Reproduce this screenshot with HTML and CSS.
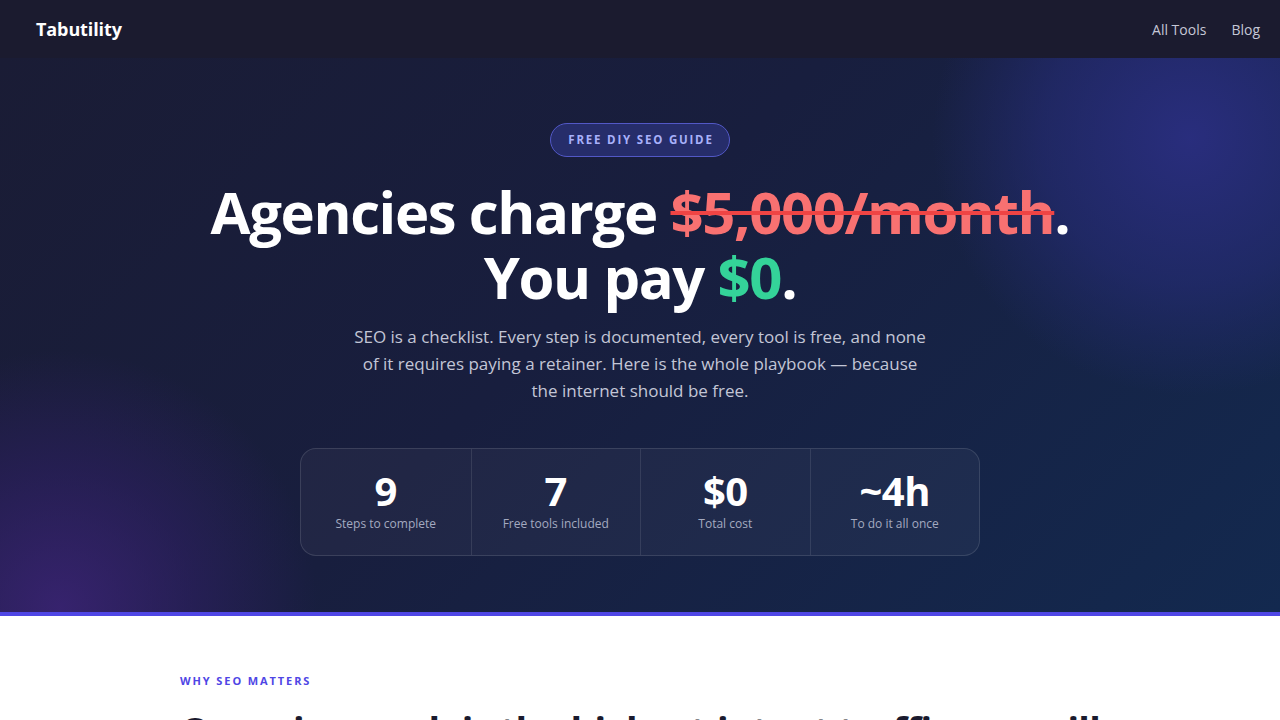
FILE: index.html
```html
<!DOCTYPE html>
<html lang="en">
<head>
<meta charset="utf-8">
<title>Free DIY SEO Guide — Tabutility</title>
<link rel="stylesheet" href="styles.css">
</head>
<body>
<header class="nav">
  <a class="logo" href="#">Tabutility</a>
  <nav class="links">
    <a href="#">All Tools</a>
    <a href="#">Blog</a>
  </nav>
</header>
<section class="hero">
  <div class="glow glow-a"></div>
  <div class="glow glow-b"></div>
  <div class="hero-inner">
    <span class="badge">FREE DIY SEO GUIDE</span>
    <h1 class="title">Agencies charge <s class="price">$5,000/month</s>.<br>You pay <span class="free">$0</span>.</h1>
    <p class="lead">SEO is a checklist. Every step is documented, every tool is free, and none of it requires paying a retainer. Here is the whole playbook — because the internet should be free.</p>
    <div class="stats">
      <div class="stat"><div class="num">9</div><div class="label">Steps to complete</div></div>
      <div class="stat"><div class="num">7</div><div class="label">Free tools included</div></div>
      <div class="stat"><div class="num">$0</div><div class="label">Total cost</div></div>
      <div class="stat"><div class="num">~4h</div><div class="label">To do it all once</div></div>
    </div>
  </div>
</section>
<section class="why">
  <div class="why-inner">
    <div class="eyebrow">WHY SEO MATTERS</div>
    <h2 class="why-title">Organic search is the highest-intent traffic you will ever get</h2>
  </div>
</section>
</body>
</html>
```
FILE: styles.css
```css
* { box-sizing: border-box; }
html, body { margin: 0; padding: 0; }
body {
  font-family: "Open Sans", "Noto Sans", sans-serif;
  background: #ffffff;
  color: #1a1a2e;
}
a { text-decoration: none; color: inherit; }

.nav {
  height: 58px;
  background: #1b1b2f;
  display: flex;
  align-items: center;
  justify-content: space-between;
  padding: 0 20px 0 36px;
}
.logo {
  color: #ffffff;
  font-weight: 700;
  font-size: 18px;
  letter-spacing: -0.1px;
}
.links { display: flex; gap: 25px; }
.links a { color: #c5c7d6; font-size: 14px; }

.hero {
  position: relative;
  overflow: hidden;
  background: linear-gradient(135deg, #1a1c35 0%, #181e3e 45%, #13294f 100%);
  border-bottom: 4px solid #4f46e5;
  height: 558px;
}
.glow {
  position: absolute;
  border-radius: 50%;
  pointer-events: none;
}
.glow-a {
  width: 520px; height: 520px;
  left: -200px; top: 290px;
  background: radial-gradient(circle, rgba(62, 36, 122, 0.8) 0%, rgba(52, 32, 110, 0.45) 38%, rgba(40, 30, 90, 0) 70%);
}
.glow-b {
  width: 520px; height: 520px;
  right: -170px; top: -180px;
  background: radial-gradient(circle, rgba(42, 46, 128, 0.95) 0%, rgba(38, 44, 120, 0.6) 40%, rgba(30, 40, 100, 0) 70%);
}
.hero-inner {
  position: relative;
  display: flex;
  flex-direction: column;
  align-items: center;
  padding-top: 65px;
}
.badge {
  display: inline-block;
  padding: 8px 15px 8px 17px;
  border-radius: 999px;
  background: #262d6a;
  border: 1px solid #5258c6;
  color: #a8b1fb;
  font-size: 11.5px;
  font-weight: 700;
  letter-spacing: 1.8px;
  line-height: 16px;
}
.title {
  margin: 22px 0 0;
  text-align: center;
  color: #ffffff;
  font-size: 58px;
  font-weight: 700;
  line-height: 65px;
  letter-spacing: -1.4px;
}
.price {
  color: #f87171;
  text-decoration: line-through;
  text-decoration-color: #ef4444;
  text-decoration-thickness: 4px;
}
.free { color: #34d399; }
.lead {
  margin: 14px 0 0;
  max-width: 585px;
  text-align: center;
  color: #c3c6d6;
  font-size: 17px;
  line-height: 27px;
}
.stats {
  margin-top: 44px;
  width: 680px;
  height: 108px;
  display: grid;
  grid-template-columns: repeat(4, 1fr);
  border-radius: 16px;
  border: 1px solid rgba(255, 255, 255, 0.12);
  background: rgba(255, 255, 255, 0.04);
  overflow: hidden;
}
.stat {
  display: flex;
  flex-direction: column;
  align-items: center;
  justify-content: center;
  border-left: 1px solid rgba(255, 255, 255, 0.1);
  padding-bottom: 4px;
}
.stat:first-child { border-left: none; }
.num {
  color: #ffffff;
  font-size: 40px;
  font-weight: 700;
  line-height: 48px;
  letter-spacing: -0.5px;
}
.label {
  color: #a4aac0;
  font-size: 12px;
  line-height: 18px;
}

.why { background: #ffffff; }
.why-inner {
  max-width: 920px;
  margin: 0 auto;
  padding-top: 57px;
}
.eyebrow {
  color: #4f46e5;
  font-size: 11px;
  font-weight: 700;
  letter-spacing: 1.9px;
  line-height: 16px;
}
.why-title {
  margin: 18px 0 0;
  font-size: 38px;
  font-weight: 700;
  line-height: 46px;
  letter-spacing: -0.8px;
  color: #1a1a2e;
}
```
